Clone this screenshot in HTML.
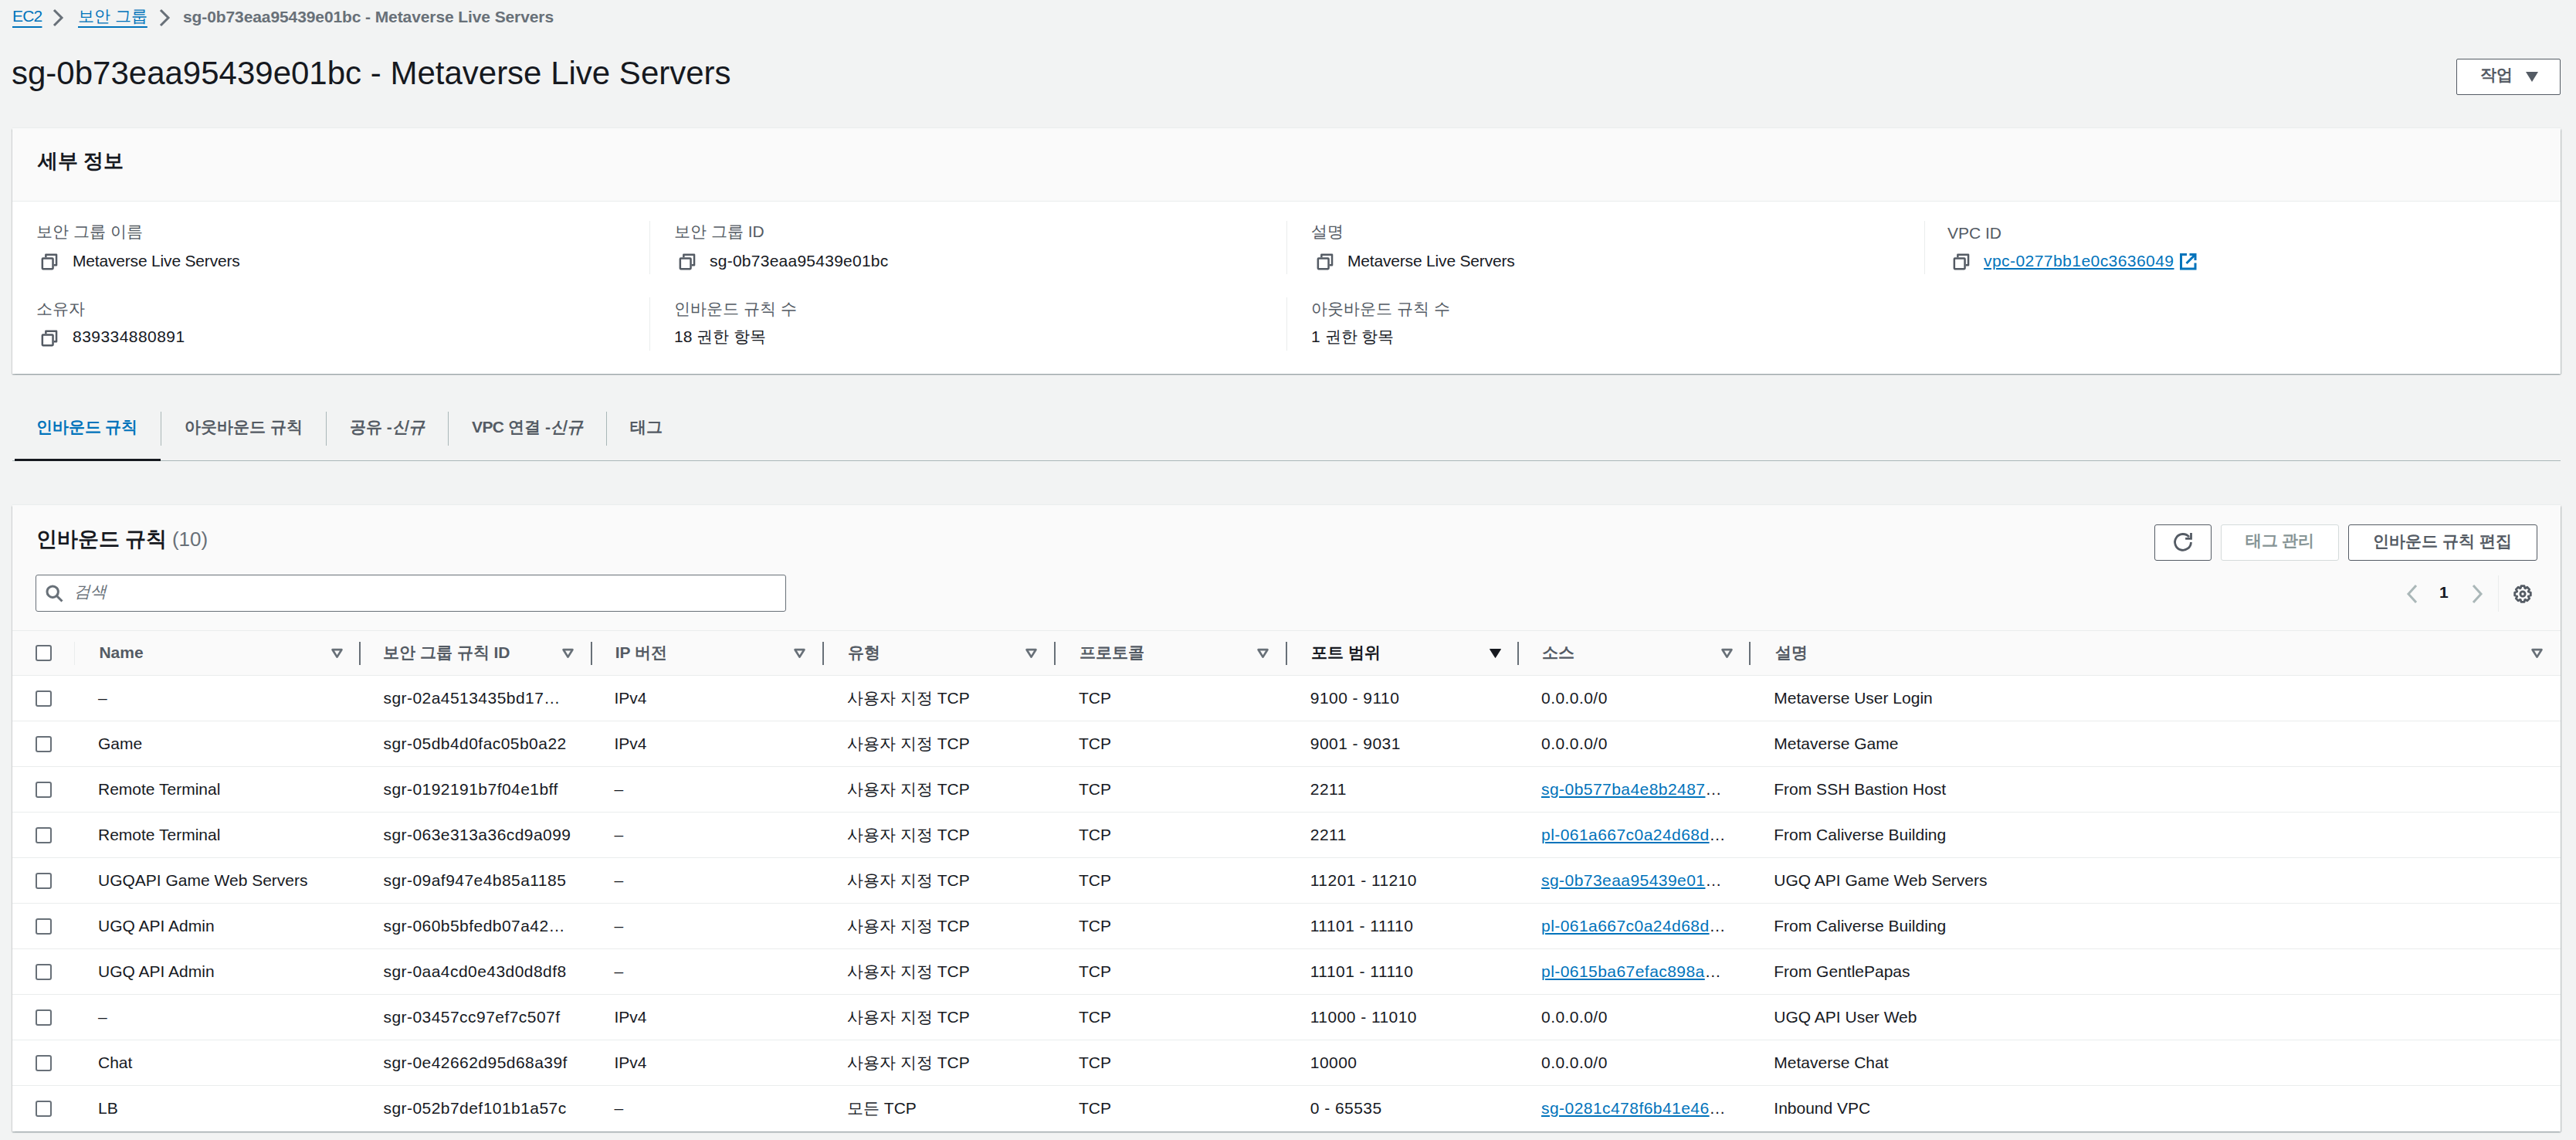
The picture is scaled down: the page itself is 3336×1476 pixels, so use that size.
<!DOCTYPE html>
<html><head><meta charset="utf-8">
<style>
*{box-sizing:border-box;margin:0;padding:0}
html,body{width:3336px;height:1476px;overflow:hidden;background:#f2f3f3}
body{position:relative;font-family:"Liberation Sans",sans-serif;font-size:21px;color:#16191f;line-height:24px}
.a{position:absolute;white-space:nowrap}
.lnk{color:#0073bb;text-decoration:underline;text-decoration-thickness:2px;text-underline-offset:2px}
.bc{text-underline-offset:6px}
.id{letter-spacing:0.45px}
.lbl{color:#545b64}
.b{font-weight:bold}
.box{position:absolute;background:#fff;box-shadow:0 1.5px 1.5px 0 rgba(0,28,36,.3),1.5px 0.5px 1.5px 0 rgba(0,28,36,.15),-1.5px 0.5px 1.5px 0 rgba(0,28,36,.15),0 -1px 0 0 #eaeded}
.vd{position:absolute;width:1px;background:#eaeded}
svg{position:absolute;overflow:visible}
</style></head>
<body>
<!-- breadcrumbs -->
<div class="a lnk bc" style="left:16px;top:9px;letter-spacing:-0.8px">EC2</div>
<svg style="left:66px;top:10px" width="20" height="26" viewBox="0 0 20 26"><path d="M4 3 L14 13 L4 23" fill="none" stroke="#687078" stroke-width="3"/></svg>
<div class="a lnk bc" style="left:101px;top:9px">보안 그룹</div>
<svg style="left:204px;top:10px" width="20" height="26" viewBox="0 0 20 26"><path d="M4 3 L14 13 L4 23" fill="none" stroke="#687078" stroke-width="3"/></svg>
<div class="a b" style="left:237px;top:10px;letter-spacing:-0.1px;color:#687078">sg-0b73eaa95439e01bc - Metaverse Live Servers</div>

<!-- title -->
<div class="a" style="left:15px;top:71px;font-size:42px;line-height:48px">sg-0b73eaa95439e01bc - Metaverse Live Servers</div>

<!-- actions button -->
<div class="a" style="left:3181px;top:76px;width:135px;height:47px;border:1.5px solid #545b64;border-radius:2px;background:#fff"></div>
<div class="a b" style="left:3212px;top:85px;color:#545b64">작업</div>
<svg style="left:3271px;top:93px" width="16" height="13" viewBox="0 0 16 13"><path d="M0 0 H16 L8 13 Z" fill="#545b64"/></svg>

<!-- details container -->
<div class="box" style="left:16px;top:166px;width:3300px;height:318px">
  <div style="position:absolute;left:0;top:0;width:100%;height:95px;background:#fafafa;border-bottom:1px solid #eaeded"></div>
</div>
<div class="a b" style="left:48.5px;top:193px;font-size:26px;line-height:30px">세부 정보</div>

<!-- details col 1 -->
<div class="a lbl" style="left:47px;top:288px">보안 그룹 이름</div>
<div class="a" style="left:94px;top:326px;letter-spacing:-0.18px">Metaverse Live Servers</div>
<div class="a lbl" style="left:47px;top:387.5px">소유자</div>
<div class="a id" style="left:94px;top:424px">839334880891</div>
<svg style="left:53px;top:328px" width="22" height="22" viewBox="0 0 22 22"><g fill="none" stroke="#545b64" stroke-width="2.5" stroke-linejoin="round"><rect x="1.85" y="6.45" width="13.7" height="13.7" rx="0.8"/><path d="M6.35 5.2 V1.75 H20.05 V15.25 H16.8"/></g></svg><svg style="left:53px;top:427px" width="22" height="22" viewBox="0 0 22 22"><g fill="none" stroke="#545b64" stroke-width="2.5" stroke-linejoin="round"><rect x="1.85" y="6.45" width="13.7" height="13.7" rx="0.8"/><path d="M6.35 5.2 V1.75 H20.05 V15.25 H16.8"/></g></svg>
<!-- col 2 -->
<div class="vd" style="left:841px;top:286px;height:69px"></div>
<div class="vd" style="left:841px;top:385px;height:69px"></div>
<div class="a lbl" style="left:873px;top:288px">보안 그룹 ID</div>
<div class="a" style="left:919px;top:326px;letter-spacing:0.25px">sg-0b73eaa95439e01bc</div>
<div class="a lbl" style="left:873px;top:387.5px">인바운드 규칙 수</div>
<div class="a" style="left:873px;top:424px">18 권한 항목</div>
<svg style="left:879px;top:328px" width="22" height="22" viewBox="0 0 22 22"><g fill="none" stroke="#545b64" stroke-width="2.5" stroke-linejoin="round"><rect x="1.85" y="6.45" width="13.7" height="13.7" rx="0.8"/><path d="M6.35 5.2 V1.75 H20.05 V15.25 H16.8"/></g></svg>
<!-- col 3 -->
<div class="vd" style="left:1666px;top:286px;height:69px"></div>
<div class="vd" style="left:1666px;top:385px;height:69px"></div>
<div class="a lbl" style="left:1698px;top:288px">설명</div>
<div class="a" style="left:1745px;top:326px;letter-spacing:-0.18px">Metaverse Live Servers</div>
<div class="a lbl" style="left:1698px;top:387.5px">아웃바운드 규칙 수</div>
<div class="a" style="left:1698px;top:424px">1 권한 항목</div>
<svg style="left:1705px;top:328px" width="22" height="22" viewBox="0 0 22 22"><g fill="none" stroke="#545b64" stroke-width="2.5" stroke-linejoin="round"><rect x="1.85" y="6.45" width="13.7" height="13.7" rx="0.8"/><path d="M6.35 5.2 V1.75 H20.05 V15.25 H16.8"/></g></svg>
<!-- col 4 -->
<div class="vd" style="left:2492px;top:286px;height:69px"></div>
<div class="a lbl" style="left:2522px;top:290px">VPC ID</div>
<div class="a lnk id" style="left:2569px;top:326px">vpc-0277bb1e0c3636049</div>

<svg style="left:2529px;top:328px" width="22" height="22" viewBox="0 0 22 22"><g fill="none" stroke="#545b64" stroke-width="2.5" stroke-linejoin="round"><rect x="1.85" y="6.45" width="13.7" height="13.7" rx="0.8"/><path d="M6.35 5.2 V1.75 H20.05 V15.25 H16.8"/></g></svg><svg style="left:2823px;top:328px" width="22" height="22" viewBox="0 0 22 22"><g fill="none" stroke="#0073bb" stroke-width="3"><path d="M9 1.5 H1.5 V20 H20 V12.5"/><path d="M12.5 1.5 H20 V9"/><path d="M20 1.5 L8.5 13"/></g></svg>
<!-- tabs -->
<div class="a b" style="left:46.5px;top:541px;color:#0073bb">인바운드 규칙</div>
<div class="a b" style="left:239px;top:541px;color:#545b64">아웃바운드 규칙</div>
<div class="a b" style="left:453px;top:541px;color:#545b64">공유 -<i>신규</i></div>
<div class="a b" style="left:611px;top:541px;color:#545b64"><span style="letter-spacing:-0.6px">VPC</span> 연결 -<i>신규</i></div>
<div class="a b" style="left:816px;top:541px;color:#545b64">태그</div>
<div class="a" style="left:208px;top:533px;width:1px;height:44px;background:#aab7b8"></div>
<div class="a" style="left:422px;top:533px;width:1px;height:44px;background:#aab7b8"></div>
<div class="a" style="left:580px;top:533px;width:1px;height:44px;background:#aab7b8"></div>
<div class="a" style="left:785px;top:533px;width:1px;height:44px;background:#aab7b8"></div>
<div class="a" style="left:16px;top:596px;width:3300px;height:1px;background:#aab7b8"></div>
<div class="a" style="left:19px;top:594px;width:189px;height:3px;background:#16191f"></div>

<!-- table container -->
<div class="box" style="left:16px;top:654px;width:3300px;height:811px">
  <div style="position:absolute;left:0;top:0;width:100%;height:220px;background:#fafafa;border-bottom:1px solid #eaeded"></div>
</div>
<div class="a b" style="left:47px;top:683px;font-size:26.5px;line-height:30px">인바운드 규칙<span style="font-weight:normal;color:#687078;margin-left:6.5px;font-size:26px">(10)</span></div>
<div class="a" style="left:46px;top:744px;width:972px;height:48px;border:1.5px solid #687078;border-radius:3px;background:#fff"></div>
<svg style="left:59px;top:757px" width="23" height="23" viewBox="0 0 23 23"><circle cx="9.2" cy="9.2" r="7.2" fill="none" stroke="#687078" stroke-width="3"/><path d="M14.5 14.5 L21.5 21.5" stroke="#687078" stroke-width="3"/></svg>
<div class="a" style="left:95.5px;top:754px;color:#687078;font-style:italic">검색</div>
<div class="a" style="left:2790px;top:679px;width:74px;height:47px;border:1.5px solid #545b64;border-radius:3px;background:#fff"></div>
<svg style="left:2810px;top:685px" width="35" height="35" viewBox="0 0 35 35"><path d="M27.4 16.9 A10.4 10.4 0 1 1 24.97 10.2" fill="none" stroke="#545b64" stroke-width="2.8"/><path d="M20.1 12.35 H27.5 V5.07" fill="none" stroke="#545b64" stroke-width="2.8" stroke-linejoin="miter"/></svg>
<div class="a" style="left:2876px;top:679px;width:153px;height:47px;border:1.5px solid #d5dbdb;border-radius:3px;background:#fff"></div>
<div class="a b" style="left:2907.5px;top:688px;color:#879596">태그 관리</div>
<div class="a" style="left:3041px;top:679px;width:245px;height:47px;border:1.5px solid #545b64;border-radius:3px;background:#fff"></div>
<div class="a b" style="left:3073px;top:689px;color:#545b64">인바운드 규칙 편집</div>
<svg style="left:3114px;top:756px" width="20" height="26" viewBox="0 0 20 26"><path d="M15 2 L5 13 L15 24" fill="none" stroke="#aab7b8" stroke-width="3"/></svg>
<div class="a b" style="left:3159px;top:755px">1</div>
<svg style="left:3198px;top:756px" width="20" height="26" viewBox="0 0 20 26"><path d="M5 2 L15 13 L5 24" fill="none" stroke="#aab7b8" stroke-width="3"/></svg>
<div class="a" style="left:3235px;top:745px;width:1px;height:47px;background:#eaeded"></div>
<svg style="left:3255px;top:757px" width="24" height="24" viewBox="0 0 24 24"><g fill="none" stroke="#545b64" stroke-width="2.8" stroke-linejoin="round"><path d="M10.00 1.69 L14.00 1.69 L14.74 4.48 L15.38 4.75 L17.87 3.30 L20.70 6.13 L19.25 8.62 L19.52 9.26 L22.31 10.00 L22.31 14.00 L19.52 14.74 L19.25 15.38 L20.70 17.87 L17.87 20.70 L15.38 19.25 L14.74 19.52 L14.00 22.31 L10.00 22.31 L9.26 19.52 L8.62 19.25 L6.13 20.70 L3.30 17.87 L4.75 15.38 L4.48 14.74 L1.69 14.00 L1.69 10.00 L4.48 9.26 L4.75 8.62 L3.30 6.13 L6.13 3.30 L8.62 4.75 L9.26 4.48 Z"/><circle cx="12" cy="12" r="3.1"/></g></svg>
<div class="a" style="left:16px;top:816px;width:3300px;height:59px;background:#fafafa;border-top:1px solid #eaeded;border-bottom:1px solid #eaeded"></div>
<div class="a" style="left:46px;top:835px;width:21px;height:21px;border:2px solid #687078;border-radius:3px;background:#fff"></div>
<div class="a" style="left:96px;top:831px;width:1px;height:30px;background:#eaeded"></div>
<div class="a" style="left:465px;top:831px;width:1.5px;height:30px;background:#687078"></div>
<div class="a" style="left:765px;top:831px;width:1.5px;height:30px;background:#687078"></div>
<div class="a" style="left:1065px;top:831px;width:1.5px;height:30px;background:#687078"></div>
<div class="a" style="left:1365px;top:831px;width:1.5px;height:30px;background:#687078"></div>
<div class="a" style="left:1665px;top:831px;width:1.5px;height:30px;background:#687078"></div>
<div class="a" style="left:1965px;top:831px;width:1.5px;height:30px;background:#687078"></div>
<div class="a" style="left:2265px;top:831px;width:1.5px;height:30px;background:#687078"></div>
<div class="a b" style="left:128.4px;top:833px;color:#545b64">Name</div>
<div class="a b" style="left:496px;top:833px;color:#545b64">보안 그룹 규칙 ID</div>
<div class="a b" style="left:796.7px;top:833px;color:#545b64">IP 버전</div>
<div class="a b" style="left:1098px;top:833px;color:#545b64">유형</div>
<div class="a b" style="left:1398px;top:833px;color:#545b64">프로토콜</div>
<div class="a b" style="left:1698px;top:833px;color:#16191f">포트 범위</div>
<div class="a b" style="left:1996.7px;top:833px;color:#545b64">소스</div>
<div class="a b" style="left:2298.5px;top:833px;color:#545b64">설명</div>
<svg style="left:428.5px;top:839.5px" width="15" height="12" viewBox="0 0 15 12"><path d="M1.6 1.2 H13.4 L7.5 10.6 Z" fill="none" stroke="#687078" stroke-width="2.7" stroke-linejoin="round"/></svg>
<svg style="left:728.0px;top:839.5px" width="15" height="12" viewBox="0 0 15 12"><path d="M1.6 1.2 H13.4 L7.5 10.6 Z" fill="none" stroke="#687078" stroke-width="2.7" stroke-linejoin="round"/></svg>
<svg style="left:1028.0px;top:839.5px" width="15" height="12" viewBox="0 0 15 12"><path d="M1.6 1.2 H13.4 L7.5 10.6 Z" fill="none" stroke="#687078" stroke-width="2.7" stroke-linejoin="round"/></svg>
<svg style="left:1328.0px;top:839.5px" width="15" height="12" viewBox="0 0 15 12"><path d="M1.6 1.2 H13.4 L7.5 10.6 Z" fill="none" stroke="#687078" stroke-width="2.7" stroke-linejoin="round"/></svg>
<svg style="left:1628.0px;top:839.5px" width="15" height="12" viewBox="0 0 15 12"><path d="M1.6 1.2 H13.4 L7.5 10.6 Z" fill="none" stroke="#687078" stroke-width="2.7" stroke-linejoin="round"/></svg>
<svg style="left:1928.5px;top:839.5px" width="15" height="12" viewBox="0 0 15 12"><path d="M0.5 0.5 H14.5 L7.5 11.5 Z" fill="#16191f" stroke="#16191f" stroke-width="1" stroke-linejoin="round"/></svg>
<svg style="left:2228.5px;top:839.5px" width="15" height="12" viewBox="0 0 15 12"><path d="M1.6 1.2 H13.4 L7.5 10.6 Z" fill="none" stroke="#687078" stroke-width="2.7" stroke-linejoin="round"/></svg>
<svg style="left:3278.0px;top:839.5px" width="15" height="12" viewBox="0 0 15 12"><path d="M1.6 1.2 H13.4 L7.5 10.6 Z" fill="none" stroke="#687078" stroke-width="2.7" stroke-linejoin="round"/></svg>
<div class="a" style="left:16px;top:933px;width:3300px;height:1px;background:#eaeded"></div>
<div class="a" style="left:46px;top:894px;width:21px;height:21px;border:2px solid #687078;border-radius:3px;background:#fff"></div>
<div class="a" style="left:127px;top:892px">–</div>
<div class="a id" style="left:496.5px;top:892px">sgr-02a4513435bd17…</div>
<div class="a" style="left:795.5px;top:892px">IPv4</div>
<div class="a" style="left:1097px;top:892px">사용자 지정 TCP</div>
<div class="a" style="left:1397px;top:892px">TCP</div>
<div class="a id" style="left:1696.8px;top:892px">9100 - 9110</div>
<div class="a id" style="left:1996px;top:892px">0.0.0.0/0</div>
<div class="a" style="left:2297.3px;top:892px">Metaverse User Login</div>
<div class="a" style="left:16px;top:992px;width:3300px;height:1px;background:#eaeded"></div>
<div class="a" style="left:46px;top:953px;width:21px;height:21px;border:2px solid #687078;border-radius:3px;background:#fff"></div>
<div class="a" style="left:127px;top:951px">Game</div>
<div class="a id" style="left:496.5px;top:951px">sgr-05db4d0fac05b0a22</div>
<div class="a" style="left:795.5px;top:951px">IPv4</div>
<div class="a" style="left:1097px;top:951px">사용자 지정 TCP</div>
<div class="a" style="left:1397px;top:951px">TCP</div>
<div class="a id" style="left:1696.8px;top:951px">9001 - 9031</div>
<div class="a id" style="left:1996px;top:951px">0.0.0.0/0</div>
<div class="a" style="left:2297.3px;top:951px">Metaverse Game</div>
<div class="a" style="left:16px;top:1051px;width:3300px;height:1px;background:#eaeded"></div>
<div class="a" style="left:46px;top:1012px;width:21px;height:21px;border:2px solid #687078;border-radius:3px;background:#fff"></div>
<div class="a" style="left:127px;top:1010px">Remote Terminal</div>
<div class="a id" style="left:496.5px;top:1010px">sgr-0192191b7f04e1bff</div>
<div class="a" style="left:795.5px;top:1010px">–</div>
<div class="a" style="left:1097px;top:1010px">사용자 지정 TCP</div>
<div class="a" style="left:1397px;top:1010px">TCP</div>
<div class="a id" style="left:1696.8px;top:1010px">2211</div>
<div class="a id" style="left:1996px;top:1010px"><span class="lnk">sg-0b577ba4e8b2487</span>…</div>
<div class="a" style="left:2297.3px;top:1010px">From SSH Bastion Host</div>
<div class="a" style="left:16px;top:1110px;width:3300px;height:1px;background:#eaeded"></div>
<div class="a" style="left:46px;top:1071px;width:21px;height:21px;border:2px solid #687078;border-radius:3px;background:#fff"></div>
<div class="a" style="left:127px;top:1069px">Remote Terminal</div>
<div class="a id" style="left:496.5px;top:1069px">sgr-063e313a36cd9a099</div>
<div class="a" style="left:795.5px;top:1069px">–</div>
<div class="a" style="left:1097px;top:1069px">사용자 지정 TCP</div>
<div class="a" style="left:1397px;top:1069px">TCP</div>
<div class="a id" style="left:1696.8px;top:1069px">2211</div>
<div class="a id" style="left:1996px;top:1069px"><span class="lnk">pl-061a667c0a24d68d</span>…</div>
<div class="a" style="left:2297.3px;top:1069px">From Caliverse Building</div>
<div class="a" style="left:16px;top:1169px;width:3300px;height:1px;background:#eaeded"></div>
<div class="a" style="left:46px;top:1130px;width:21px;height:21px;border:2px solid #687078;border-radius:3px;background:#fff"></div>
<div class="a" style="left:127px;top:1128px">UGQAPI Game Web Servers</div>
<div class="a id" style="left:496.5px;top:1128px">sgr-09af947e4b85a1185</div>
<div class="a" style="left:795.5px;top:1128px">–</div>
<div class="a" style="left:1097px;top:1128px">사용자 지정 TCP</div>
<div class="a" style="left:1397px;top:1128px">TCP</div>
<div class="a id" style="left:1696.8px;top:1128px">11201 - 11210</div>
<div class="a id" style="left:1996px;top:1128px"><span class="lnk">sg-0b73eaa95439e01</span>…</div>
<div class="a" style="left:2297.3px;top:1128px">UGQ API Game Web Servers</div>
<div class="a" style="left:16px;top:1228px;width:3300px;height:1px;background:#eaeded"></div>
<div class="a" style="left:46px;top:1189px;width:21px;height:21px;border:2px solid #687078;border-radius:3px;background:#fff"></div>
<div class="a" style="left:127px;top:1187px">UGQ API Admin</div>
<div class="a id" style="left:496.5px;top:1187px">sgr-060b5bfedb07a42…</div>
<div class="a" style="left:795.5px;top:1187px">–</div>
<div class="a" style="left:1097px;top:1187px">사용자 지정 TCP</div>
<div class="a" style="left:1397px;top:1187px">TCP</div>
<div class="a id" style="left:1696.8px;top:1187px">11101 - 11110</div>
<div class="a id" style="left:1996px;top:1187px"><span class="lnk">pl-061a667c0a24d68d</span>…</div>
<div class="a" style="left:2297.3px;top:1187px">From Caliverse Building</div>
<div class="a" style="left:16px;top:1287px;width:3300px;height:1px;background:#eaeded"></div>
<div class="a" style="left:46px;top:1248px;width:21px;height:21px;border:2px solid #687078;border-radius:3px;background:#fff"></div>
<div class="a" style="left:127px;top:1246px">UGQ API Admin</div>
<div class="a id" style="left:496.5px;top:1246px">sgr-0aa4cd0e43d0d8df8</div>
<div class="a" style="left:795.5px;top:1246px">–</div>
<div class="a" style="left:1097px;top:1246px">사용자 지정 TCP</div>
<div class="a" style="left:1397px;top:1246px">TCP</div>
<div class="a id" style="left:1696.8px;top:1246px">11101 - 11110</div>
<div class="a id" style="left:1996px;top:1246px"><span class="lnk">pl-0615ba67efac898a</span>…</div>
<div class="a" style="left:2297.3px;top:1246px">From GentlePapas</div>
<div class="a" style="left:16px;top:1346px;width:3300px;height:1px;background:#eaeded"></div>
<div class="a" style="left:46px;top:1307px;width:21px;height:21px;border:2px solid #687078;border-radius:3px;background:#fff"></div>
<div class="a" style="left:127px;top:1305px">–</div>
<div class="a id" style="left:496.5px;top:1305px">sgr-03457cc97ef7c507f</div>
<div class="a" style="left:795.5px;top:1305px">IPv4</div>
<div class="a" style="left:1097px;top:1305px">사용자 지정 TCP</div>
<div class="a" style="left:1397px;top:1305px">TCP</div>
<div class="a id" style="left:1696.8px;top:1305px">11000 - 11010</div>
<div class="a id" style="left:1996px;top:1305px">0.0.0.0/0</div>
<div class="a" style="left:2297.3px;top:1305px">UGQ API User Web</div>
<div class="a" style="left:16px;top:1405px;width:3300px;height:1px;background:#eaeded"></div>
<div class="a" style="left:46px;top:1366px;width:21px;height:21px;border:2px solid #687078;border-radius:3px;background:#fff"></div>
<div class="a" style="left:127px;top:1364px">Chat</div>
<div class="a id" style="left:496.5px;top:1364px">sgr-0e42662d95d68a39f</div>
<div class="a" style="left:795.5px;top:1364px">IPv4</div>
<div class="a" style="left:1097px;top:1364px">사용자 지정 TCP</div>
<div class="a" style="left:1397px;top:1364px">TCP</div>
<div class="a id" style="left:1696.8px;top:1364px">10000</div>
<div class="a id" style="left:1996px;top:1364px">0.0.0.0/0</div>
<div class="a" style="left:2297.3px;top:1364px">Metaverse Chat</div>
<div class="a" style="left:46px;top:1425px;width:21px;height:21px;border:2px solid #687078;border-radius:3px;background:#fff"></div>
<div class="a" style="left:127px;top:1423px">LB</div>
<div class="a id" style="left:496.5px;top:1423px">sgr-052b7def101b1a57c</div>
<div class="a" style="left:795.5px;top:1423px">–</div>
<div class="a" style="left:1097px;top:1423px">모든 TCP</div>
<div class="a" style="left:1397px;top:1423px">TCP</div>
<div class="a id" style="left:1696.8px;top:1423px">0 - 65535</div>
<div class="a id" style="left:1996px;top:1423px"><span class="lnk">sg-0281c478f6b41e46</span>…</div>
<div class="a" style="left:2297.3px;top:1423px">Inbound VPC</div>
</body></html>
